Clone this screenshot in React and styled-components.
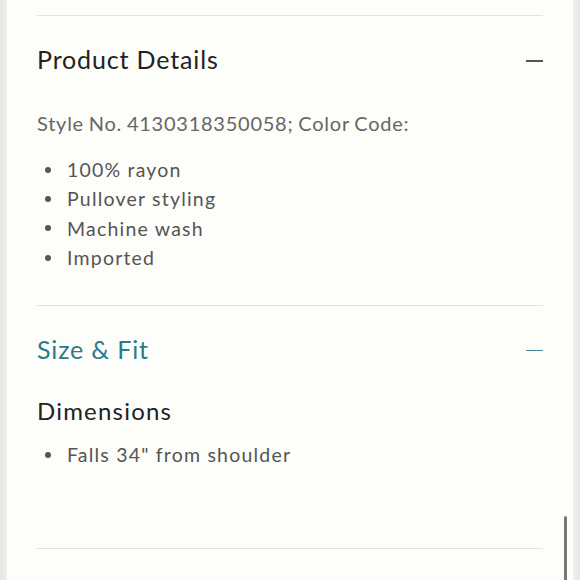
import React from 'react';
import styled, { createGlobalStyle } from 'styled-components';

const GlobalStyle = createGlobalStyle`
    html, body {
        margin: 0;
        padding: 0;
        background: #e9e9e6;
    }
    body {
        font-family: 'Lato', 'Liberation Sans', sans-serif;
        -webkit-font-smoothing: antialiased;
    }
`;

const Page = styled.div`
    position: relative;
    height: 580px;
    padding: 0 7px;
    overflow: hidden;
    background: linear-gradient(to right, #e4e4e2 0, #efefed 7px, transparent 7px),
        linear-gradient(to left, #e6e6e4 0, #f0f0ee 7px, transparent 7px);
    background-color: #e9e9e6;
`;

const Panel = styled.div`
    height: 100%;
    background: #fdfdf9;
    padding: 15px 30px 0;
    box-sizing: border-box;
`;

const Section = styled.section`
    border-top: 1px solid #e2e2df;
    padding-bottom: ${props => props.bottom}px;
`;

const Header = styled.div`
    display: flex;
    align-items: center;
    justify-content: space-between;
    height: ${props => props.height}px;
`;

const Title = styled.h2`
    margin: 0 0 4px;
    font-size: 25px;
    font-weight: 400;
    letter-spacing: 0.85px;
    color: ${props => (props.active ? '#2a7b8c' : '#222222')};
`;

const Minus = styled.span`
    display: block;
    width: 17px;
    height: 1.5px;
    background: ${props => (props.active ? '#3b8796' : '#555555')};
`;

const StyleLine = styled.p`
    margin: 2px 0 0;
    font-size: 20px;
    line-height: 30px;
    letter-spacing: 0.75px;
    word-spacing: -1px;
    color: #666666;
`;

const SubTitle = styled.h3`
    margin: 1px 0 0;
    font-size: 24px;
    line-height: 30px;
    font-weight: 400;
    letter-spacing: 1.2px;
    color: #222222;
`;

const List = styled.ul`
    list-style: none;
    margin: ${props => props.top}px 0 0;
    padding: 0;
`;

const Item = styled.li`
    display: flex;
    align-items: center;
    font-size: 19.5px;
    line-height: 29.3px;
    letter-spacing: 1.2px;
    color: #555555;

    &::before {
        content: '';
        width: 6px;
        height: 6px;
        border-radius: 50%;
        background: #555555;
        margin: 0 16px 0 8px;
        flex-shrink: 0;
    }
`;

const ScrollThumb = styled.div`
    position: absolute;
    left: 564px;
    top: 516px;
    width: 3px;
    height: 80px;
    border-radius: 2px;
    background: #777777;
`;

const App = () => (
    <>
        <GlobalStyle />
        <Page>
            <Panel>
                <Section bottom={33}>
                    <Header height={90}>
                        <Title>Product Details</Title>
                        <Minus />
                    </Header>
                    <StyleLine>Style No. 4130318350058; Color Code:</StyleLine>
                    <List top={17}>
                        <Item>100% rayon</Item>
                        <Item>Pullover styling</Item>
                        <Item>Machine wash</Item>
                        <Item>Imported</Item>
                    </List>
                </Section>
                <Section bottom={79}>
                    <Header height={89}>
                        <Title active>Size &amp; Fit</Title>
                        <Minus active />
                    </Header>
                    <SubTitle>Dimensions</SubTitle>
                    <List top={14}>
                        <Item>Falls 34" from shoulder</Item>
                    </List>
                </Section>
                <Section />
            </Panel>
            <ScrollThumb />
        </Page>
    </>
);

export default App;
